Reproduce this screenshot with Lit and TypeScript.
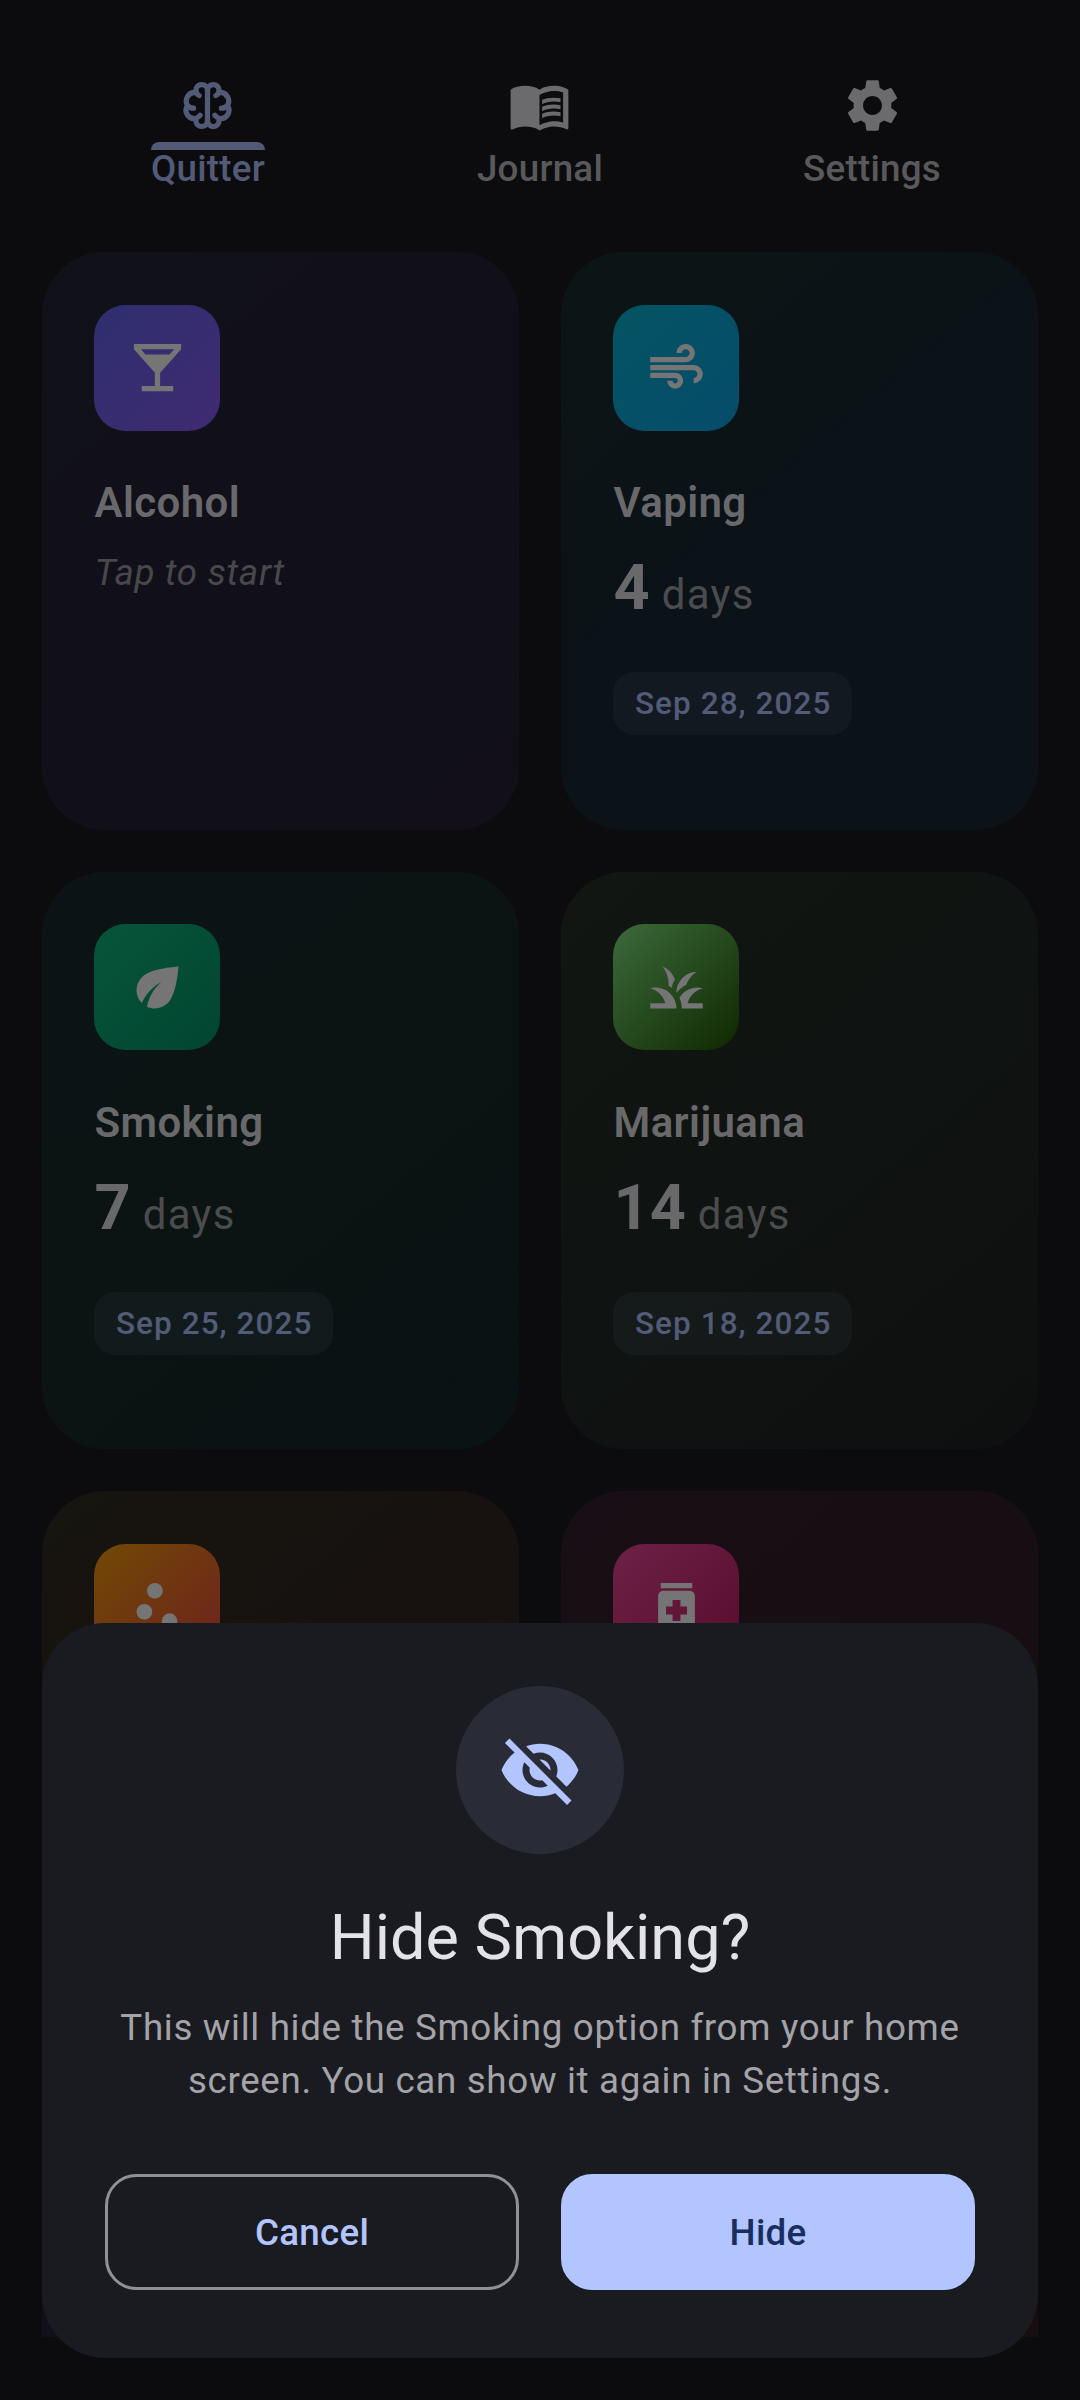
import { LitElement, html, css, svg, nothing } from "lit";
import { customElement, property } from "lit/decorators.js";

const icons: Record<string, unknown> = {
  brain: svg`<g fill="none" stroke="currentColor" stroke-width="2" stroke-linecap="round" stroke-linejoin="round">
    <path d="M12 6.2V17.8"/>
    <path d="M12 6.2A2.2 2.2 0 0 0 7.6 6.2Q7.6 7.6 8.8 8.2M7.4 7A3.3 3.3 0 0 0 4.4 12Q5.2 13 6.7 13M4.4 12A3.2 3.2 0 0 0 7.4 17Q8.4 16.6 9.2 15.7M7.4 17L7.6 17.8A2.2 2.2 0 0 0 12 17.8"/>
    <path d="M12 6.2A2.2 2.2 0 0 1 16.4 6.2Q16.4 7.6 15.2 8.2M16.6 7A3.3 3.3 0 0 1 19.6 12Q18.8 13 17.3 13M19.6 12A3.2 3.2 0 0 1 16.6 17Q15.6 16.6 14.8 15.7M16.6 17L16.4 17.8A2.2 2.2 0 0 1 12 17.8"/></g>`,
  book: svg`<path d="M21 5c-1.11-.35-2.33-.5-3.5-.5-1.95 0-4.05.4-5.5 1.5-1.45-1.1-3.55-1.5-5.5-1.5S2.45 4.9 1 6v14.65c0 .25.25.5.5.5.1 0 .15-.05.25-.05C3.1 20.45 5.05 20 6.5 20c1.95 0 4.05.4 5.5 1.5 1.35-.85 3.8-1.5 5.5-1.5 1.65 0 3.35.3 4.75 1.05.1.05.15.05.25.05.25 0 .5-.25.5-.5V6c-.6-.45-1.25-.75-2-1zm0 13.5c-1.1-.35-2.3-.5-3.5-.5-1.7 0-4.15.65-5.5 1.5V8c1.35-.85 3.8-1.5 5.5-1.5 1.2 0 2.4.15 3.5.5v11.5z"/><path d="M17.5 10.5c.88 0 1.73.09 2.5.26V9.24c-.79-.15-1.64-.24-2.5-.24-1.7 0-3.24.29-4.5.83v1.66c1.13-.64 2.7-.99 4.5-.99zM13 12.49v1.66c1.13-.64 2.7-.99 4.5-.99.88 0 1.73.09 2.5.26V11.9c-.79-.15-1.64-.24-2.5-.24-1.7 0-3.24.3-4.5.83zM17.5 14.33c-1.7 0-3.24.29-4.5.83v1.66c1.13-.64 2.7-.99 4.5-.99.88 0 1.73.09 2.5.26v-1.52c-.79-.16-1.64-.24-2.5-.24z"/>`,
  gear: svg`<path d="M19.14 12.94c.04-.3.06-.61.06-.94 0-.32-.02-.64-.07-.94l2.03-1.58c.18-.14.23-.41.12-.61l-1.92-3.32c-.12-.22-.37-.29-.59-.22l-2.39.96c-.5-.38-1.03-.7-1.62-.94L14.4 2.81c-.04-.24-.24-.41-.48-.41h-3.84c-.24 0-.43.17-.47.41L9.25 5.35C8.66 5.59 8.12 5.92 7.63 6.29L5.24 5.33c-.22-.08-.47 0-.59.22L2.74 8.87c-.12.21-.08.47.12.61l2.03 1.58C4.84 11.36 4.8 11.69 4.8 12s.02.64.07.94l-2.03 1.58c-.18.14-.23.41-.12.61l1.92 3.32c.12.22.37.29.59.22l2.39-.96c.5.38 1.03.7 1.62.94l.36 2.54c.05.24.24.41.48.41h3.84c.24 0 .44-.17.47-.41l.36-2.54c.59-.24 1.13-.56 1.62-.94l2.39.96c.22.08.47 0 .59-.22l1.92-3.32c.12-.22.07-.47-.12-.61l-2.01-1.58zM12 15.6c-1.98 0-3.6-1.62-3.6-3.6s1.62-3.6 3.6-3.6 3.6 1.62 3.6 3.6-1.62 3.6-3.6 3.6z"/>`,
  bar: svg`<path d="M21 5V3H3v2l8 9v5H6v2h12v-2h-5v-5l8-9zM7.43 7L5.66 5h12.69l-1.78 2H7.43z"/>`,
  air: svg`<path d="M14.5 17c0 1.65-1.35 3-3 3s-3-1.35-3-3h2c0 .55.45 1 1 1s1-.45 1-1-.45-1-1-1H2v-2h9.5c1.65 0 3 1.35 3 3zM19 6.5C19 4.57 17.43 3 15.5 3S12 4.57 12 6.5h2c0-.83.67-1.5 1.5-1.5s1.5.67 1.5 1.5S16.33 8 15.5 8H2v2h13.5c1.93 0 3.5-1.57 3.5-3.5zM18.5 11H2v2h16.5c.83 0 1.5.67 1.5 1.5s-.67 1.5-1.5 1.5v2c1.93 0 3.5-1.57 3.5-3.5S20.43 11 18.5 11z"/>`,
  leaf: svg`<path d="M6.05 8.05c-2.73 2.73-2.73 7.15-.02 9.88 1.47-3.4 4.09-6.24 7.36-7.93-2.77 2.34-4.71 5.61-5.39 9.32 2.6 1.23 5.8.78 7.95-1.37C19.43 14.47 20 4 20 4S9.53 4.57 6.05 8.05z"/>`,
  grass: svg`<path d="M12 20H2v-2h5.75C7.02 15.19 4.81 12.99 2 12.26 2.64 12.1 3.31 12 4 12c4.42 0 8 3.58 8 8zM22 12.26c-.64-.16-1.31-.26-2-.26-2.93 0-5.48 1.58-6.88 3.93.29.66.53 1.35.67 2.07.13.65.2 1.32.2 2h8v-2h-5.75c.74-2.81 2.95-5.01 5.76-5.74zM15.64 11.02c.78-2.09 2.23-3.84 4.09-5C15.44 6.16 12 9.67 12 14v.02c.95-1.27 2.2-2.3 3.64-3zM11.42 8.85C10.58 6.66 8.88 4.89 6.7 4 8.14 5.86 9 8.18 9 10.71c0 .21-.03.41-.04.61.43.24.83.52 1.22.82.21-1.18.65-2.29 1.24-3.29z"/>`,
  dots: svg`<circle cx="7" cy="14" r="3"/><circle cx="11" cy="6" r="3"/><circle cx="16.6" cy="17.6" r="3"/>`,
  pills: svg`<path d="M6 3h12v2H6zM17 6H7c-1.1 0-2 .9-2 2v11c0 1.1.9 2 2 2h10c1.1 0 2-.9 2-2V8c0-1.1-.9-2-2-2zm-1 9h-2.5v2.5h-3V15H8v-3h2.5V9.5h3V12H16v3z"/>`,
  hidden: svg`<path d="M12 7c2.76 0 5 2.24 5 5 0 .65-.13 1.26-.36 1.83l2.92 2.92c1.51-1.26 2.7-2.89 3.43-4.75-1.73-4.39-6-7.5-11-7.5-1.4 0-2.74.25-3.98.7l2.16 2.16C10.74 7.13 11.35 7 12 7zM2 4.27l2.28 2.28.46.46C3.08 8.3 1.78 10.02 1 12c1.73 4.39 6 7.5 11 7.5 1.55 0 3.03-.3 4.38-.84l.42.42L19.73 22 21 20.73 3.27 3 2 4.27zM7.53 9.8l1.55 1.55c-.05.21-.08.43-.08.65 0 1.66 1.34 3 3 3 .22 0 .44-.03.65-.08l1.55 1.55c-.67.33-1.41.53-2.2.53-2.76 0-5-2.24-5-5 0-.79.2-1.53.53-2.2zM11.84 9.02l3.15 3.15.02-.16c0-1.66-1.34-3-3-3l-.17.01z"/>`,
};

const icon = (name: string) =>
  html`<svg class="icon" viewBox="0 0 24 24" fill="currentColor" aria-hidden="true">${icons[name]}</svg>`;

interface Habit {
  name: string;
  icon: string;
  theme: string;
  days?: number;
  since?: string;
}

const habits: Habit[] = [
  { name: "Alcohol", icon: "bar", theme: "indigo" },
  { name: "Vaping", icon: "air", theme: "cyan", days: 4, since: "Sep 28, 2025" },
  { name: "Smoking", icon: "leaf", theme: "green", days: 7, since: "Sep 25, 2025" },
  { name: "Marijuana", icon: "grass", theme: "moss", days: 14, since: "Sep 18, 2025" },
  { name: "", icon: "dots", theme: "amber" },
  { name: "", icon: "pills", theme: "pink" },
  { name: "", icon: "", theme: "violet" },
  { name: "", icon: "", theme: "red" },
];

@customElement("habit-card")
export class HabitCard extends LitElement {
  @property({ attribute: false }) habit!: Habit;

  static styles = css`
    :host { display: block; }
    .card {
      box-sizing: border-box;
      height: 577.5px;
      padding: 52.5px 52px;
      border-radius: 63px;
      background: linear-gradient(140deg, var(--from), var(--mid), var(--to));
    }
    .tile {
      width: 126px;
      height: 126px;
      border-radius: 31.5px;
      display: flex;
      align-items: center;
      justify-content: center;
      color: #757575;
      background: linear-gradient(135deg, var(--tile-from), var(--tile-to));
    }
    .icon { width: 63px; height: 63px; display: block; }
    .name {
      margin: 40.5px 0 0 0.5px;
      font-size: 42px;
      line-height: 63px;
      font-weight: 600;
      letter-spacing: 0.39px;
      color: #69696b;
    }
    .hint {
      margin: 13px 0 0 0.5px;
      font-size: 36.75px;
      line-height: 52.5px;
      font-style: italic;
      letter-spacing: 0.66px;
      color: #48484b;
    }
    .count {
      margin: 12px 0 0 0.5px;
      height: 84px;
      display: flex;
      align-items: baseline;
      gap: 12px;
      line-height: 84px;
    }
    .number { font-size: 63px; font-weight: 700; color: #69696b; }
    .unit { font-size: 42px; letter-spacing: 1.31px; color: #4b4c4e; }
    .since {
      display: inline-block;
      margin-top: 42px;
      padding: 11px 20.5px 10px 22px;
      border-radius: 21px;
      font-size: 31.5px;
      line-height: 42px;
      font-weight: 500;
      letter-spacing: 1.05px;
      color: #525b78;
      background: rgba(94, 100, 125, 0.09);
    }
    .indigo { --from: #11111a; --mid: #11101a; --to: #120f19; --tile-from: #2e2f6f; --tile-to: #402a71; }
    .cyan { --from: #0c1515; --mid: #0b1218; --to: #0b1218; --tile-from: #035462; --tile-to: #064c6b; }
    .green { --from: #0b1316; --mid: #0b1412; --to: #091214; --tile-from: #07553b; --tile-to: #024530; }
    .moss { --from: #121612; --mid: #0f1311; --to: #0e100f; --tile-from: #3c6a3c; --tile-to: #0f2800; }
    .amber { --from: #17150f; --mid: #17110f; --to: #170e11; --tile-from: #714905; --tile-to: #6e1f1f; }
    .pink { --from: #170f15; --mid: #170e13; --to: #170b11; --tile-from: #6d2146; --tile-to: #570b2b; }
    .violet { --from: #110f19; --mid: #110f19; --to: #110f19; }
    .red { --from: #180d11; --mid: #180d11; --to: #180d11; }
  `;

  render() {
    const h = this.habit;
    return html`<article class="card ${h.theme}">
      ${h.icon ? html`<div class="tile">${icon(h.icon)}</div>` : nothing}
      ${h.name ? html`<div class="name">${h.name}</div>` : nothing}
      ${h.days !== undefined
        ? html`<div class="count"><span class="number">${h.days}</span><span class="unit">days</span></div>
            <div class="since">${h.since}</div>`
        : h.name
          ? html`<div class="hint">Tap to start</div>`
          : nothing}
    </article>`;
  }
}

@customElement("app-root")
export class AppRoot extends LitElement {
  static styles = css`
    :host {
      display: block;
      font-family: Roboto, "Liberation Sans", sans-serif;
    }
    .screen {
      position: relative;
      box-sizing: border-box;
      width: 1080px;
      height: 2400px;
      overflow: hidden;
      padding: 0 42px 63px;
      display: flex;
      flex-direction: column;
      background: #0c0c0e;
    }
    .tabs {
      flex: none;
      box-sizing: border-box;
      height: 252px;
      padding-top: 73.5px;
      display: grid;
      grid-template-columns: repeat(3, 1fr);
      justify-items: center;
    }
    .tab {
      display: flex;
      flex-direction: column;
      align-items: center;
      color: #6b6b6d;
    }
    .icon { width: 63px; height: 63px; display: block; }
    .bar {
      align-self: stretch;
      height: 8px;
      margin: 5.5px 0 -7px;
      border-radius: 8px 8px 0 0;
    }
    .label {
      color: #59595c;
      font-size: 36.75px;
      line-height: 52.5px;
      font-weight: 500;
      letter-spacing: 0.26px;
    }
    .active, .active .label { color: #525a78; }
    .active .bar { background: #525a78; }
    .grid {
      flex: 1;
      min-height: 0;
      overflow: hidden;
      display: grid;
      grid-template-columns: repeat(2, 477px);
      grid-auto-rows: 577.5px;
      gap: 42px;
    }
    .sheet {
      position: absolute;
      left: 42px;
      right: 42px;
      bottom: 42px;
      box-sizing: border-box;
      height: 735px;
      padding: 63px;
      border-radius: 63px;
      background: #1a1b20;
      display: flex;
      flex-direction: column;
      align-items: center;
      text-align: center;
    }
    .badge {
      width: 168px;
      height: 168px;
      border-radius: 50%;
      display: flex;
      align-items: center;
      justify-content: center;
      background: #292b36;
      color: #b2c5ff;
    }
    .badge .icon { width: 84px; height: 84px; }
    .title {
      margin: 42px 0 22px;
      font-size: 63px;
      line-height: 84px;
      font-weight: 400;
      color: #e3e2e9;
    }
    .text {
      margin: 0;
      font-size: 36.75px;
      line-height: 52.5px;
      letter-spacing: 0.66px;
      color: #a3a3a8;
    }
    .actions {
      align-self: stretch;
      margin-top: 67px;
      display: grid;
      grid-template-columns: 1fr 1fr;
      gap: 42px;
    }
    .button {
      box-sizing: border-box;
      height: 116px;
      border: 3px solid #b2c5ff;
      border-radius: 31.5px;
      font: 500 36.75px Roboto, "Liberation Sans", sans-serif;
      letter-spacing: 0.26px;
      padding: 0;
      background: #b2c5ff;
      color: #182e60;
    }
    .outlined {
      background: transparent;
      border-color: #8f9099;
      color: #b2c5ff;
    }
  `;

  private tab(name: string, label: string, active = false) {
    return html`<div class="tab ${active ? "active" : ""}">
      ${icon(name)}
      <div class="bar"></div>
      <div class="label">${label}</div>
    </div>`;
  }

  render() {
    return html`<div class="screen">
      <nav class="tabs">
        ${this.tab("brain", "Quitter", true)} ${this.tab("book", "Journal")} ${this.tab("gear", "Settings")}
      </nav>
      <main class="grid">${habits.map((h) => html`<habit-card .habit=${h}></habit-card>`)}</main>
      <section class="sheet" role="dialog">
        <div class="badge">${icon("hidden")}</div>
        <h2 class="title">Hide Smoking?</h2>
        <p class="text">This will hide the Smoking option from your home<br />screen. You can show it again in Settings.</p>
        <div class="actions">
          <button class="button outlined">Cancel</button>
          <button class="button">Hide</button>
        </div>
      </section>
    </div>`;
  }
}
